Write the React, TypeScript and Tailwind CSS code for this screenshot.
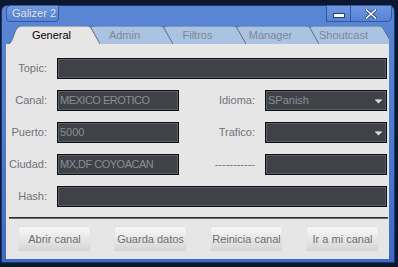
import React from "react";

const tabs = ["General", "Admin", "Filtros", "Manager", "Shoutcast"];
const zs = ["z-[5]", "z-[4]", "z-[3]", "z-[2]", "z-[1]"];

function Tab({ label, i }: { label: string; i: number }) {
  const active = i === 0;
  const d = "M0,18 C3,18 5,12 7,6 C9,1 11,0 15,0 L79,0 C81,0 82,1 83,2 L92,18";
  return (
    <div className={`relative w-[92px] h-[18px] shrink-0 flex items-center justify-center pr-[5px] ${zs[i]} ${i > 0 ? "-ml-[19px]" : ""}`}>
      <svg className="absolute inset-0" width="92" height="18" viewBox="0 0 92 18">
        <path d={d + " Z"} fill={active ? "#e6e6e6" : "#aac3e3"} />
        <path d={d} fill="none" stroke="#5d6c84" strokeWidth="1" />
      </svg>
      <span className={`relative text-[11px] leading-none ${active ? "text-black" : "text-[#7d8792]"}`}>{label}</span>
    </div>
  );
}

function Input({ w, value, caps, select }: { w: string; value?: string; caps?: boolean; select?: boolean }) {
  return (
    <div className={`relative ${w} h-[21px] border border-[#0e0e0e] bg-[#3f4247] shadow-[inset_0_0_0_1px_#5a5e64] flex items-center pl-[2px]`}>
      {value && (
        <span className={`text-[11px] leading-none text-[#8a8f96] ${caps ? "tracking-[-0.5px]" : ""}`}>{value}</span>
      )}
      {select && (
        <svg className="absolute right-[4px] top-[8px]" width="7" height="5" viewBox="0 0 7 5">
          <rect x="0" y="0" width="7" height="1" fill="#9a9ea4" />
          <polygon points="0,1 7,1 3.5,4.5" fill="#d6d8db" />
        </svg>
      )}
    </div>
  );
}

function Label({ text }: { text: string }) {
  return <div className="w-[41px] text-right text-[11px] leading-none text-[#6d727a] mr-[10px]">{text}</div>;
}

function Mid({ text }: { text: string }) {
  return <div className="w-[86px] text-right text-[11px] leading-none text-[#6d727a] pr-[10px]">{text}</div>;
}

function Btn({ text }: { text: string }) {
  return (
    <div className="w-[73px] h-[26px] rounded-[3px] bg-gradient-to-b from-[#f8f8f8] to-[#d5d5d5] border border-[#e2e2e2] flex items-center justify-center text-[11px] text-[#6a6f77]">
      {text}
    </div>
  );
}

export default function App() {
  return (
    <div className="w-[398px] h-[267px] bg-[#0b1830] pt-[5px] pl-[1px] font-['Liberation_Sans',Arial,sans-serif] overflow-hidden">
      <div className="w-[394px] h-[258px] rounded-t-[6px] border border-[#1c3670] bg-gradient-to-b from-[#5a86d6] via-[#4f7bcc] to-[#3e6bc2] flex flex-col">
        <div className="h-[38px] flex flex-col">
          <div className="flex justify-between h-[16px]">
            <div className="ml-[4px] w-[53px] h-[17px] -mt-[1px] rounded-tl-[5px] rounded-b-[4px] border border-[#34589a] bg-gradient-to-b from-[#719ae0] to-[#5783d4] flex items-center pl-[5px] text-[11px] leading-none text-[#eef3fb] [text-shadow:0_0_1px_#2a4a88]">
              Galizer 2
            </div>
            <div className="flex mr-[2px] h-[17px] -mt-[1px]">
              <div className="w-[25px] h-full border border-[#34589a] bg-gradient-to-b from-[#6e97df] to-[#5783d4] flex items-end justify-center pb-[3px]">
                <svg width="12" height="5" viewBox="0 0 12 5">
                  <rect x="0.5" y="0.5" width="11" height="4" fill="#ffffff" stroke="#24427a" />
                </svg>
              </div>
              <div className="w-[42px] h-full -ml-[1px] rounded-br-[5px] border border-[#34589a] bg-gradient-to-b from-[#6e97df] to-[#5783d4] flex items-center justify-center">
                <svg width="12" height="10" viewBox="0 0 12 10">
                  <path d="M1.5,1 L10.5,9 M10.5,1 L1.5,9" stroke="#24427a" strokeWidth="3.2" strokeLinecap="square" />
                  <path d="M1.5,1 L10.5,9 M10.5,1 L1.5,9" stroke="#ffffff" strokeWidth="1.6" strokeLinecap="square" />
                </svg>
              </div>
            </div>
          </div>
          <div className="mt-[4px] h-[18px] w-[387px] pl-[6px] flex overflow-hidden">
            {tabs.map((t, i) => (
              <Tab key={t} label={t} i={i} />
            ))}
          </div>
        </div>
        <div className="ml-[4px] mr-[5px] mb-[3px] flex-1 bg-[#e6e6e6] flex flex-col pt-[14px]">
          <div className="flex items-center">
            <Label text="Topic:" />
            <Input w="w-[330px]" />
          </div>
          <div className="flex items-center mt-[11px]">
            <Label text="Canal:" />
            <Input w="w-[122px]" value="MEXICO EROTICO" caps />
            <Mid text="Idioma:" />
            <Input w="w-[122px]" value="SPanish" select />
          </div>
          <div className="flex items-center mt-[11px]">
            <Label text="Puerto:" />
            <Input w="w-[122px]" value="5000" />
            <Mid text="Trafico:" />
            <Input w="w-[122px]" select />
          </div>
          <div className="flex items-center mt-[11px]">
            <Label text="Ciudad:" />
            <Input w="w-[122px]" value="MX,DF COYOACAN" caps />
            <Mid text="-----------" />
            <Input w="w-[122px]" />
          </div>
          <div className="flex items-center mt-[11px]">
            <Label text="Hash:" />
            <Input w="w-[330px]" />
          </div>
          <div className="ml-[3px] mr-[1px] mt-[10px] h-[2px] bg-[#2e2e2e] border-b border-[#6a6a6a]" />
          <div className="flex ml-[12px] mt-[7px] gap-[23px]">
            <Btn text="Abrir canal" />
            <Btn text="Guarda datos" />
            <Btn text="Reinicia canal" />
            <Btn text="Ir a mi canal" />
          </div>
        </div>
      </div>
    </div>
  );
}
